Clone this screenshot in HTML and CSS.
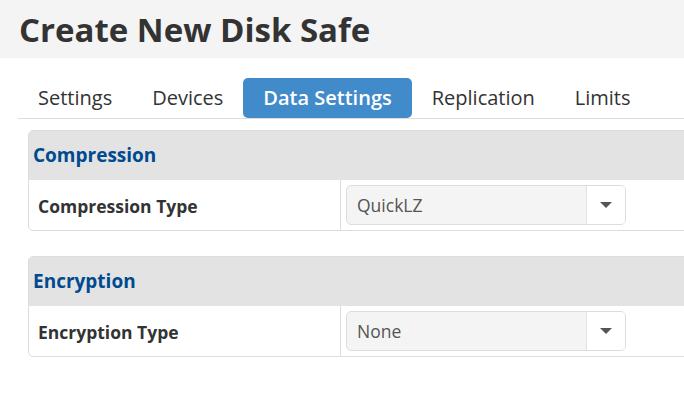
FILE: index.html
```html
<!DOCTYPE html>
<html>
<head>
<meta charset="utf-8">
<link rel="stylesheet" href="styles.css">
</head>
<body>
<div class="header"><h1 class="title">Create New Disk Safe</h1></div>
<div class="content">
  <ul class="tabs">
    <li class="tab">Settings</li>
    <li class="tab">Devices</li>
    <li class="tab active">Data Settings</li>
    <li class="tab">Replication</li>
    <li class="tab">Limits</li>
  </ul>
  <div class="panels">
    <div class="panel">
      <div class="panel-head">Compression</div>
      <div class="row">
        <div class="label">Compression Type</div>
        <div class="field">
          <div class="select">
            <span class="value">QuickLZ</span>
            <span class="btn"><span class="caret"></span></span>
          </div>
        </div>
      </div>
    </div>
    <div class="panel">
      <div class="panel-head">Encryption</div>
      <div class="row">
        <div class="label">Encryption Type</div>
        <div class="field">
          <div class="select">
            <span class="value">None</span>
            <span class="btn"><span class="caret"></span></span>
          </div>
        </div>
      </div>
    </div>
  </div>
</div>
</body>
</html>
```
FILE: styles.css
```css
* { box-sizing: border-box; }
html, body { margin: 0; padding: 0; background: #fff; overflow: hidden; }
body { font-family: "Open Sans", sans-serif; color: #333; width: 684px; }
.header { background: #f4f4f4; height: 58px; padding: 8px 0 0 19px; }
.title { margin: 0; font-size: 33px; font-weight: 700; color: #333; line-height: 44px; letter-spacing: 0; }
.content { padding: 20px 0 0 18px; overflow: hidden; }
.tabs { list-style: none; margin: 0; padding: 0; display: flex; height: 41px; border-bottom: 1px solid #ddd; }
.tab { height: 40px; padding: 0 20px; font-size: 20px; line-height: 40px; color: #333; white-space: nowrap; }
.tab.active { background: #428bca; color: #fff; font-weight: 600; border-radius: 5px; }
.panels { padding: 11px 0 0 10px; display: flex; flex-direction: column; gap: 25px; }
.panel { width: 800px; border: 1px solid #ddd; border-radius: 5px; overflow: hidden; }
.panel-head { background: #e3e3e3; height: 49px; line-height: 48px; padding-left: 4px; font-size: 19px; font-weight: 700; color: #004a8f; }
.row { display: flex; height: 50px; }
.label { width: 312px; border-right: 1px solid #ddd; padding-left: 9px; font-size: 17.5px; font-weight: 700; line-height: 52px; color: #333; }
.field { padding: 5px 0 0 5px; }
.select { display: flex; width: 280px; height: 40px; border: 1px solid #ddd; border-radius: 5px; background: #f4f4f4; overflow: hidden; }
.value { flex: 1; padding-left: 10px; font-size: 17.5px; line-height: 38px; color: #555; }
.btn { width: 39px; background: #fff; border-left: 1px solid #e3e3e3; display: flex; align-items: center; justify-content: center; }
.caret { width: 0; height: 0; border-left: 6px solid transparent; border-right: 6px solid transparent; border-top: 6px solid #555; }
```
